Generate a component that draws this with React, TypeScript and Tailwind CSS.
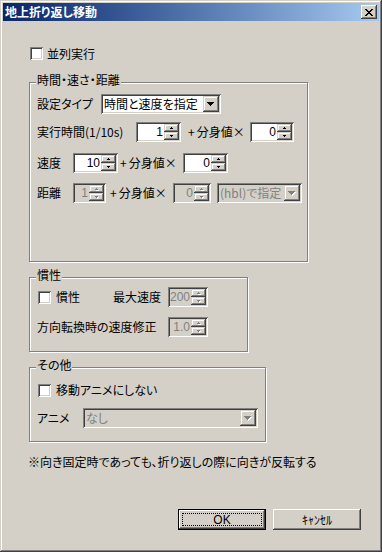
import React from "react";

const JP = "font-['Noto_Sans_CJK_JP',sans-serif] [font-feature-settings:'palt']";
const LAT = "font-['Liberation_Sans',sans-serif]";
const SUNKEN =
  "shadow-[inset_1px_1px_#808080,inset_-1px_-1px_#ffffff,inset_2px_2px_#404040,inset_-2px_-2px_#d4d0c8]";
const RAISED =
  "shadow-[inset_-1px_-1px_#404040,inset_1px_1px_#d4d0c8,inset_-2px_-2px_#808080,inset_2px_2px_#ffffff]";
const BTN =
  "shadow-[inset_-1px_-1px_#404040,inset_1px_1px_#ffffff,inset_-2px_-2px_#808080,inset_2px_2px_#d4d0c8]";

function SmallArrow({ up, dis }: { up?: boolean; dis?: boolean }) {
  const rects = up
    ? [
        [1, 0, 1],
        [0, 1, 3],
      ]
    : [
        [0, 0, 3],
        [1, 1, 1],
      ];
  return (
    <svg width="4" height="3" viewBox="0 0 4 3" shapeRendering="crispEdges">
      {dis &&
        rects.map(([x, y, w], i) => (
          <rect key={"s" + i} x={x + 1} y={y + 1} width={w} height={1} fill="#ffffff" />
        ))}
      {rects.map(([x, y, w], i) => (
        <rect key={i} x={x} y={y} width={w} height={1} fill={dis ? "#808080" : "#000000"} />
      ))}
    </svg>
  );
}

function BigArrow({ dis }: { dis?: boolean }) {
  const rects = [
    [0, 0, 7],
    [1, 1, 5],
    [2, 2, 3],
    [3, 3, 1],
  ];
  return (
    <svg width="8" height="5" viewBox="0 0 8 5" shapeRendering="crispEdges">
      {dis &&
        rects.map(([x, y, w], i) => (
          <rect key={"s" + i} x={x + 1} y={y + 1} width={w} height={1} fill="#ffffff" />
        ))}
      {rects.map(([x, y, w], i) => (
        <rect key={i} x={x} y={y} width={w} height={1} fill={dis ? "#808080" : "#000000"} />
      ))}
    </svg>
  );
}

function Spin({ w, v, dis }: { w: string; v: string; dis?: boolean }) {
  return (
    <div
      className={`flex h-[20px] shrink-0 p-[2px] ${w} ${SUNKEN} ${
        dis ? "bg-[#d4d0c8] text-[#808080]" : "bg-white text-black"
      }`}
    >
      <div className={`flex-1 pr-[1px] text-right text-[12px] leading-[16px] ${LAT}`}>{v}</div>
      <div className="flex w-[15px] flex-col bg-[#d4d0c8]">
        <div className={`flex h-[8px] items-center justify-center ${RAISED}`}>
          <SmallArrow up dis={dis} />
        </div>
        <div className={`flex h-[8px] items-center justify-center ${RAISED}`}>
          <SmallArrow dis={dis} />
        </div>
      </div>
    </div>
  );
}

function Combo({ w, v, dis }: { w: string; v: string; dis?: boolean }) {
  return (
    <div
      className={`flex h-[20px] shrink-0 p-[2px] ${w} ${SUNKEN} ${
        dis ? "bg-[#d4d0c8] text-[#808080]" : "bg-white text-black"
      }`}
    >
      <div className="flex-1 overflow-hidden whitespace-nowrap pl-[1px] text-[12px] leading-[16px]">{v}</div>
      <div className={`flex h-[16px] w-[16px] items-center justify-center bg-[#d4d0c8] pt-[1px] ${RAISED}`}>
        <BigArrow dis={dis} />
      </div>
    </div>
  );
}

function Check() {
  return <div className={`h-[13px] w-[13px] shrink-0 bg-white ${SUNKEN}`} />;
}

function Group({ label, cls, children }: { label: string; cls: string; children: React.ReactNode }) {
  return (
    <div
      className={`relative shrink-0 border border-[#808080] shadow-[inset_1px_1px_#ffffff,1px_1px_#ffffff] ${cls}`}
    >
      <span className="absolute left-[6px] top-[-11px] whitespace-nowrap bg-[#d4d0c8] px-[1px] text-[12px] leading-[16px]">
        {label}
      </span>
      {children}
    </div>
  );
}

function Plus({ w }: { w: string }) {
  return (
    <span className={`flex shrink-0 items-center whitespace-nowrap text-[12px] leading-[16px] ${w}`}>
      <span>+</span>
      <span className="ml-[2px]">分身値×</span>
    </span>
  );
}

export default function App() {
  return (
    <div
      className={`relative flex h-[552px] w-[382px] flex-col bg-[#d4d0c8] p-[3px] text-black ${JP} shadow-[inset_-1px_-1px_#404040,inset_1px_1px_#d4d0c8,inset_-2px_-2px_#808080,inset_2px_2px_#ffffff]`}
    >
      {/* title bar */}
      <div className="flex h-[18px] shrink-0 items-center justify-between bg-linear-to-r from-[#0a246a] to-[#a6caf0] pl-[2px] pr-[2px]">
        <span className="text-[12px] font-bold leading-[16px] text-white">地上折り返し移動</span>
        <div className={`flex h-[14px] w-[16px] items-center justify-center bg-[#d4d0c8] ${BTN}`}>
          <svg width="8" height="7" viewBox="0 0 8 7" shapeRendering="crispEdges">
            <path d="M0 0h2v1H0zM6 0h2v1H6zM1 1h2v1H1zM5 1h2v1H5zM2 2h4v1H2zM3 3h2v1H3zM2 4h4v1H2zM1 5h2v1H1zM5 5h2v1H5zM0 6h2v1H0zM6 6h2v1H6z" fill="#000" />
          </svg>
        </div>
      </div>

      {/* body */}
      <div className="flex flex-1 flex-col items-start pl-[26px]">
        {/* 並列実行 */}
        <div className="ml-[1px] mt-[26px] flex h-[13px] items-center">
          <Check />
          <span className="ml-[4px] whitespace-nowrap text-[12px] leading-[16px]">並列実行</span>
        </div>

        {/* 時間・速さ・距離 */}
        <Group label="時間・速さ・距離" cls="mt-[22px] h-[180px] w-[279px]">
          <div className="flex flex-col pl-[7px] pt-[11px]">
            <div className="flex h-[20px] items-center">
              <span className="w-[64px] shrink-0 whitespace-nowrap text-[12px] leading-[16px]">設定タイプ</span>
              <Combo w="w-[120px]" v="時間と速度を指定" />
            </div>
            <div className="mt-[8px] flex h-[20px] items-center">
              <span className="w-[99px] shrink-0 whitespace-nowrap text-[12px] leading-[16px]">実行時間(1/10s)</span>
              <Spin w="w-[45px]" v="1" />
              <span className="w-[7px] shrink-0" />
              <Plus w="w-[62px]" />
              <Spin w="w-[44px]" v="0" />
            </div>
            <div className="mt-[11px] flex h-[20px] items-center">
              <span className="w-[36px] shrink-0 whitespace-nowrap text-[12px] leading-[16px]">速度</span>
              <Spin w="w-[45px]" v="10" />
              <span className="w-[2px] shrink-0" />
              <Plus w="w-[63px]" />
              <Spin w="w-[45px]" v="0" />
            </div>
            <div className="mt-[10px] flex h-[20px] items-center">
              <span className="w-[36px] shrink-0 whitespace-nowrap text-[12px] leading-[16px]">距離</span>
              <Spin w="w-[33px]" v="1" dis />
              <span className="w-[4px] shrink-0" />
              <Plus w="w-[63px]" />
              <Spin w="w-[38px]" v="0" dis />
              <span className="w-[6px] shrink-0" />
              <Combo w="w-[85px]" v="(hbl)で指定" dis />
            </div>
          </div>
        </Group>

        {/* 慣性 */}
        <Group label="慣性" cls="mt-[15px] h-[75px] w-[219px]">
          <div className="flex flex-col pl-[7px] pt-[9px]">
            <div className="flex h-[20px] items-center">
              <span className="ml-[1px]">
                <Check />
              </span>
              <span className="ml-[5px] w-[57px] shrink-0 whitespace-nowrap text-[12px] leading-[16px]">慣性</span>
              <span className="w-[55px] shrink-0 whitespace-nowrap text-[12px] leading-[16px]">最大速度</span>
              <Spin w="w-[40px]" v="200" dis />
            </div>
            <div className="mt-[10px] flex h-[20px] items-center">
              <span className="w-[131px] shrink-0 whitespace-nowrap text-[12px] leading-[16px]">方向転換時の速度修正</span>
              <Spin w="w-[40px]" v="1.0" dis />
            </div>
          </div>
        </Group>

        {/* その他 */}
        <Group label="その他" cls="mt-[15px] h-[75px] w-[237px]">
          <div className="flex flex-col pl-[7px] pt-[12px]">
            <div className="flex h-[20px] items-center">
              <span className="ml-[1px]">
                <Check />
              </span>
              <span className="ml-[5px] whitespace-nowrap text-[12px] leading-[16px]">移動アニメにしない</span>
            </div>
            <div className="mt-[8px] flex h-[20px] items-center">
              <span className="w-[46px] shrink-0 whitespace-nowrap text-[12px] leading-[16px]">アニメ</span>
              <Combo w="w-[175px]" v="なし" dis />
            </div>
          </div>
        </Group>

        {/* note */}
        <div className="-ml-[1px] mt-[12px] whitespace-nowrap text-[12px] leading-[16px]">
          ※向き固定時であっても、折り返しの際に向きが反転する
        </div>

        {/* buttons */}
        <div className="ml-[149px] mt-[39px] flex gap-[7px]">
          <div className="relative flex h-[21px] w-[88px] items-center justify-center border border-black bg-[#d4d0c8]">
            <div className={`absolute inset-0 ${BTN}`} />
            <div className="absolute inset-[3px] border border-dotted border-black" />
            <span className={`relative text-[12px] leading-[14px] ${LAT}`}>OK</span>
          </div>
          <div className={`flex h-[21px] w-[88px] items-center justify-center bg-[#d4d0c8] ${BTN}`}>
            <span className="text-[12px] leading-[14px]">ｷｬﾝｾﾙ</span>
          </div>
        </div>
      </div>
    </div>
  );
}
